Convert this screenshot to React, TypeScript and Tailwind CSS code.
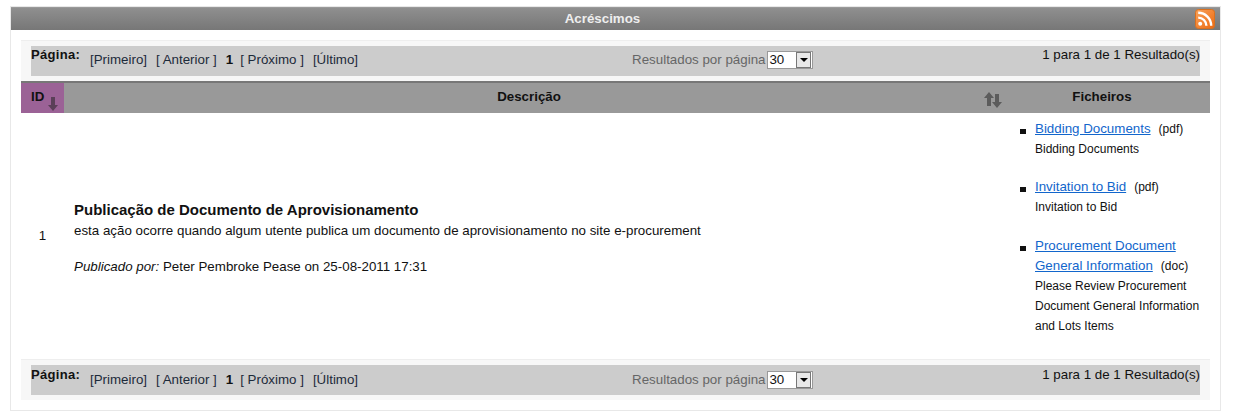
function RssIcon() {
  return (
    <svg width="20" height="20" viewBox="0 0 20 20" className="block">
      <defs>
        <linearGradient id="rss" x1="0" y1="0" x2="1" y2="1">
          <stop offset="0" stopColor="#f9a25a" />
          <stop offset="1" stopColor="#ec6a12" />
        </linearGradient>
      </defs>
      <rect x="0.5" y="0.5" width="19" height="19" rx="3" fill="url(#rss)" stroke="#d9701f" />
      <circle cx="5.2" cy="14.8" r="2" fill="#fff" />
      <path d="M3.2 8.6a8.2 8.2 0 0 1 8.2 8.2" fill="none" stroke="#fff" strokeWidth="2.4" />
      <path d="M3.2 3.8a13 13 0 0 1 13 13" fill="none" stroke="#fff" strokeWidth="2.4" />
    </svg>
  );
}

function ArrowDown({ color }: { color: string }) {
  return (
    <svg width="10" height="14" viewBox="0 0 10 14" className="block">
      <path d="M3 0h4v8h3l-5 6-5-6h3z" fill={color} />
    </svg>
  );
}

function ArrowUp({ color }: { color: string }) {
  return (
    <svg width="10" height="14" viewBox="0 0 10 14" className="block">
      <path d="M3 14h4V6h3L5 0 0 6h3z" fill={color} />
    </svg>
  );
}

function Pager({ bottom }: { bottom?: boolean }) {
  return (
    <div className={bottom ? "flex h-[30px] items-start bg-[#cccccc] pt-[1px] text-[#111]" : "flex h-[30px] items-start bg-[#cccccc] text-[#111]"}>
      <div className="w-[59px] pt-[1px] text-[13px] font-bold leading-[15px] tracking-[0.3px]">Página:</div>
      <div className="flex pt-[6px] leading-[16px] text-[#1c2a3a]">
        <span>[Primeiro]</span>
        <span className="ml-[9px]">[ Anterior ]</span>
        <span className="ml-[9px] font-bold text-[#111]">1</span>
        <span className="ml-[7px]">[ Próximo ]</span>
        <span className="ml-[9px]">[Último]</span>
      </div>
      <div className="ml-[274px] flex items-start pt-[6px] leading-[16px] text-[#666666]">
        <span>Resultados por página</span>
        <div className="-mt-[1px] ml-[2px] flex h-[18px] w-[46px] items-center justify-between border border-[#999999] bg-white pl-[1px] pr-[1px] text-[#111]">
          <span>30</span>
          <span className="flex h-[16px] w-[15px] items-center justify-center border border-[#777777] bg-[#e8e8e8]">
            <span className="h-0 w-0 border-x-[4px] border-t-[4px] border-x-transparent border-t-black" />
          </span>
        </div>
      </div>
      <div className="ml-auto pt-[1px] leading-[16px]">1 para 1 de 1 Resultado(s)</div>
    </div>
  );
}

function FileItem({ link, ext, note, pushed }: { link: string[]; ext: string; note: string[]; pushed?: boolean }) {
  return (
    <li className={pushed ? "relative mt-[1px] pl-[41px]" : "relative pl-[41px]"}>
      <span className="absolute left-[26px] top-[10px] h-[5px] w-[6px] bg-[#111]" />
      <div className="text-[13.33px] leading-[20px]">
        {link.map((line, i) => (
          <span key={line}>
            <a href="#" className="text-[#1266cc] underline">
              {line}
            </a>
            {i < link.length - 1 ? <br /> : null}
          </span>
        ))}
        <span className="ml-[8px] text-[12px] text-[#111]">({ext})</span>
      </div>
      <div className="text-[12px] leading-[20px] text-[#111]">
        {note.map((line) => (
          <div key={line}>{line}</div>
        ))}
      </div>
    </li>
  );
}

export default function App() {
  return (
    <div className="h-[418px] bg-white pl-[10px] pr-[12px] pt-[6px] font-['Liberation_Sans',Arial,sans-serif] text-[13.33px]">
      <div className="h-[405px] border border-[#e8e8e8] bg-white">
        <div className="flex h-[23px] items-center justify-center relative bg-gradient-to-b from-[#8f8f8f] to-[#777777] border-t border-[#999]">
          <span className="pr-[26px] font-bold text-[#eeeeee]">Acréscimos</span>
          <span className="absolute right-[5px] top-[1px]">
            <RssIcon />
          </span>
        </div>
        <div className="mx-[10px] mt-[10px] border-t border-[#eeeeee]">
          <div className="bg-[#f7f7f7] px-[10px] pb-[5px] pt-[5px]">
            <Pager />
          </div>
          <div className="flex h-[32px] border-t-2 border-[#777777] bg-[#999999] text-[#111] font-bold">
            <div className="flex w-[43px] bg-[#9b6296] pl-[10px]">
              <span className="pt-[6px] leading-[15px]">ID</span>
              <span className="ml-[4px] mt-[14px]">
                <ArrowDown color="#5a3f58" />
              </span>
            </div>
            <div className="relative flex w-[930px] justify-center pt-[6px] leading-[15px]">
              Descrição
              <span className="absolute right-[-8px] top-[9px] flex">
                <ArrowUp color="#5c5c5c" />
                <span className="-ml-[2px] mt-[2px]">
                  <ArrowDown color="#5c5c5c" />
                </span>
              </span>
            </div>
            <div className="flex-1 pt-[6px] text-center leading-[15px]">Ficheiros</div>
          </div>
          <div className="flex h-[246px] bg-white text-[#111]">
            <div className="flex w-[43px] items-center justify-center">1</div>
            <div className="flex w-[930px] flex-col justify-center pl-[10px] pt-[3px]">
              <div className="text-[15px] font-bold leading-[18px] text-[#111]">
                Publicação de Documento de Aprovisionamento
              </div>
              <div className="mt-[4px] leading-[16px]">
                esta ação ocorre quando algum utente publica um documento de aprovisionamento no site e-procurement
              </div>
              <div className="mt-[20px] leading-[16px]">
                <em>Publicado por:</em> Peter Pembroke Pease on 25-08-2011 17:31
              </div>
            </div>
            <ul className="flex flex-1 flex-col gap-[18px] pt-[6px]">
              <FileItem link={["Bidding Documents"]} ext="pdf" note={["Bidding Documents"]} />
              <FileItem link={["Invitation to Bid"]} ext="pdf" note={["Invitation to Bid"]} />
              <FileItem
                pushed
                link={["Procurement Document", "General Information"]}
                ext="doc"
                note={["Please Review Procurement", "Document General Information", "and Lots Items"]}
              />
            </ul>
          </div>
          <div className="border-t border-[#eeeeee] bg-[#f7f7f7] px-[10px] py-[5px]">
            <Pager bottom />
          </div>
        </div>
      </div>
    </div>
  );
}
